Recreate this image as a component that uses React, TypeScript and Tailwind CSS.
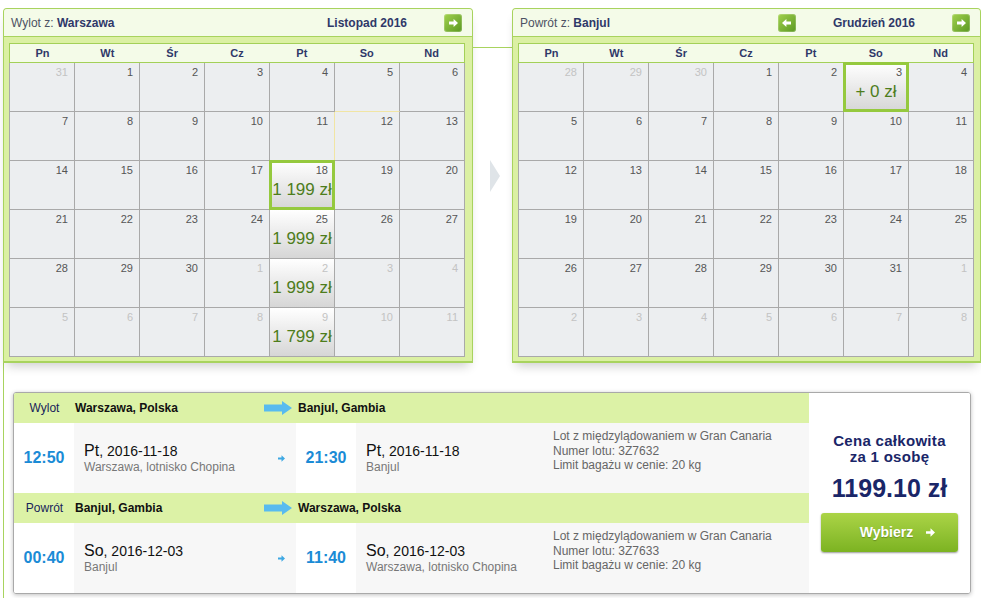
type Day = { d: number; o?: boolean };

const range = (a: number, b: number, o = false): Day[] =>
  Array.from({ length: b - a + 1 }, (_, i) => ({ d: a + i, o }));

const novDays = [...range(31, 31, true), ...range(1, 30), ...range(1, 11, true)];
const decDays = [...range(28, 30, true), ...range(1, 31), ...range(1, 8, true)];

// prices keyed by cell index in the 6x7 grid
const novPrices: Record<number, string> = { 18: "1 199 zł", 25: "1 999 zł", 32: "1 999 zł", 39: "1 799 zł" };
const decPrices: Record<number, string> = { 5: "+ 0 zł" };

const weekDays = ["Pn", "Wt", "Śr", "Cz", "Pt", "So", "Nd"];

function NavButton({ dir }: { dir: "prev" | "next" }) {
  return (
    <span className="flex h-[18px] w-[18px] items-center justify-center rounded-[3px] bg-linear-to-br from-[#a2d24e] to-[#5a9821] shadow-[inset_0_0_0_1px_rgba(255,255,255,0.2)]">
      <svg width="9" height="8" viewBox="0 0 9 8" className={dir === "prev" ? "rotate-180" : ""}>
        <path d="M0 2.6h4.6V0L9 4 4.6 8V5.4H0z" fill="#fff" />
      </svg>
    </span>
  );
}

function Cell({ day, price, sel, warmR, warmB }: { day: Day; price?: string; sel?: boolean; warmR?: boolean; warmB?: boolean }) {
  return (
    <div
      className={`relative h-[49px] border-r border-b ${warmR ? "border-r-[#f1e5a4]" : "border-r-[#a9a9a9]"} ${
        warmB ? "border-b-[#f1e5a4]" : "border-b-[#a9a9a9]"
      } ${price ? "bg-linear-to-b from-white to-[#d6d6d6]" : "bg-[#eceef0]"}`}
    >
      <div className={`pr-[6px] pt-[3px] text-right text-[11px] leading-[13px] ${day.o ? "text-[#c3c3c3]" : "text-[#555]"}`}>{day.d}</div>
      {price && <div className="mt-[4px] text-center text-[17px] leading-none whitespace-nowrap text-[#4e7d1c]">{price}</div>}
      {sel && <div className="absolute -inset-px border-[3px] border-[#95c93e]" />}
    </div>
  );
}

function Calendar({
  label,
  city,
  month,
  days,
  prices,
  selected,
  prev,
  warm,
}: {
  label: string;
  city: string;
  month: string;
  days: Day[];
  prices: Record<number, string>;
  selected: number;
  prev?: boolean;
  warm?: boolean;
}) {
  return (
    <div className="h-[355px] shrink-0 rounded-t-[4px] border border-b-2 border-[#a8d35e] bg-[#dbf0a3] shadow-[0_7px_10px_-4px_rgba(0,0,0,0.2)]">
      <div className="flex h-[28px] items-center justify-between rounded-t-[3px] border-b border-[#a8d35e] bg-[#f4fbe8] pl-[7px] pr-[10px] text-[12px]">
        <div>
          <span className="text-[#4d5263]">{label} </span>
          <span className="font-bold text-[#2f3868]">{city}</span>
        </div>
        <div className="flex items-center gap-[37px]">
          {prev && <NavButton dir="prev" />}
          <span className="font-bold text-[#2f3868]">{month}</span>
          <NavButton dir="next" />
        </div>
      </div>
      <div className="pl-[5px] pt-[6px]">
        <div className="w-[456px]">
          <div className="grid h-[20px] grid-cols-7 border border-[#a3d058] bg-[#f4fbe8] text-[11px] font-bold text-[#2f3868]">
            {weekDays.map((w) => (
              <div key={w} className="flex items-center justify-center">
                {w}
              </div>
            ))}
          </div>
          <div className="grid grid-cols-7 border-l border-[#a9a9a9]">
            {days.map((day, i) => (
              <Cell
                key={i}
                day={day}
                price={prices[i]}
                sel={i === selected}
                warmR={warm && i === 11}
                warmB={warm && i === 5}
              />
            ))}
          </div>
        </div>
      </div>
    </div>
  );
}

function BigArrow() {
  return (
    <svg width="28" height="14" viewBox="0 0 28 14">
      <path d="M0 3.5h18V0l10 7-10 7v-3.5H0z" fill="#58bbef" />
    </svg>
  );
}

function SmallArrow({ color = "#3ea8e3", size = 7 }: { color?: string; size?: number }) {
  return (
    <svg width={size} height={size} viewBox="0 0 7 7">
      <path d="M0 2.5h3.5V0.2L7 3.5 3.5 6.8V4.5H0z" fill={color} />
    </svg>
  );
}

function DateBlock({ day, date, place }: { day: string; date: string; place: string }) {
  return (
    <div>
      <div className="leading-[18px] text-[#111]">
        <span className="text-[16px]">{day}</span>
        <span className="text-[14px]">, {date}</span>
      </div>
      <div className="text-[12px] leading-[15px] text-[#777]">{place}</div>
    </div>
  );
}

function Leg({
  label,
  from,
  to,
  dep,
  arr,
  day,
  date,
  fromPlace,
  toPlace,
  flight,
}: {
  label: string;
  from: string;
  to: string;
  dep: string;
  arr: string;
  day: string;
  date: string;
  fromPlace: string;
  toPlace: string;
  flight: string;
}) {
  return (
    <div>
      <div className="flex h-[30px] items-center bg-[#dcf2a6] text-[12px]">
        <div className="w-[61px] text-center text-[#18235a]">{label}</div>
        <div className="w-[189px] font-bold text-[#111]">{from}</div>
        <div className="flex w-[34px] items-center">
          <BigArrow />
        </div>
        <div className="font-bold text-[#111]">{to}</div>
      </div>
      <div className="flex h-[70px]">
        <div className="flex w-[60px] items-center justify-center bg-white text-[16px] font-bold text-[#1b8bd6]">{dep}</div>
        <div className="flex w-[222px] items-center justify-between bg-[#f7f7f7] pl-[10px] pr-[11px]">
          <DateBlock day={day} date={date} place={fromPlace} />
          <SmallArrow />
        </div>
        <div className="flex w-[60px] items-center justify-center bg-white text-[16px] font-bold text-[#1b8bd6]">{arr}</div>
        <div className="flex flex-1 bg-[#f7f7f7]">
          <div className="flex w-[197px] items-center pl-[10px]">
            <DateBlock day={day} date={date} place={toPlace} />
          </div>
          <div className="pt-[6px] text-[12px] leading-[14.5px] text-[#666]">
            <div>Lot z międzylądowaniem w Gran Canaria</div>
            <div>Numer lotu: {flight}</div>
            <div>Limit bagażu w cenie: 20 kg</div>
          </div>
        </div>
      </div>
    </div>
  );
}

export default function App() {
  return (
    <div className="h-[598px] w-[981px] overflow-hidden bg-white font-['Liberation_Sans',Arial,sans-serif]">
      {/* calendars */}
      <div className="flex pl-[3px] pt-[8px]">
        <div className="w-[470px]">
          <Calendar label="Wylot z:" city="Warszawa" month="Listopad 2016" days={novDays} prices={novPrices} selected={18} warm />
        </div>
        <div className="w-[39px] shrink-0">
          <div className="mt-[39px] border-t border-[#a8d35e]" />
          <div className="ml-[17px] mt-[112px] h-0 w-0 border-y-[16px] border-l-[10px] border-y-transparent border-l-[#dfe4e8]" />
        </div>
        <div className="w-[469px]">
          <Calendar label="Powrót z:" city="Banjul" month="Grudzień 2016" days={decDays} prices={decPrices} selected={5} prev />
        </div>
      </div>

      {/* flight summary */}
      <div className="ml-[3px] border-l border-[#a8d35e] pb-[6px] pl-[9px] pt-[29px]">
        <div className="flex h-[202px] w-[958px] overflow-hidden rounded-[3px] border border-[#a9a9a9] shadow-[0_1px_4px_rgba(0,0,0,0.25)]">
          <div className="w-[795px]">
            <Leg
              label="Wylot"
              from="Warszawa, Polska"
              to="Banjul, Gambia"
              dep="12:50"
              arr="21:30"
              day="Pt"
              date="2016-11-18"
              fromPlace="Warszawa, lotnisko Chopina"
              toPlace="Banjul"
              flight="3Z7632"
            />
            <Leg
              label="Powrót"
              from="Banjul, Gambia"
              to="Warszawa, Polska"
              dep="00:40"
              arr="11:40"
              day="So"
              date="2016-12-03"
              fromPlace="Banjul"
              toPlace="Warszawa, lotnisko Chopina"
              flight="3Z7633"
            />
          </div>
          <div className="flex flex-1 flex-col items-center bg-white pt-[40px]">
            <div className="text-center text-[15px] font-bold leading-[16px] tracking-[0.3px] text-[#1a2668]">
              Cena całkowita
              <br />
              za 1 osobę
            </div>
            <div className="mt-[9px] text-[25px] font-bold leading-[28px] text-[#1a2668]">1199.10 zł</div>
            <button className="mt-[11px] flex h-[39px] w-[137px] items-center justify-center gap-[13px] rounded-[3px] bg-linear-to-b from-[#abd446] to-[#7cb321] pl-[16px] text-[14px] font-bold text-white shadow-[0_1px_2px_rgba(0,0,0,0.4)] [text-shadow:0_1px_1px_rgba(0,0,0,0.25)]">
              Wybierz
              <SmallArrow color="#fff" size={9} />
            </button>
          </div>
        </div>
      </div>
    </div>
  );
}
